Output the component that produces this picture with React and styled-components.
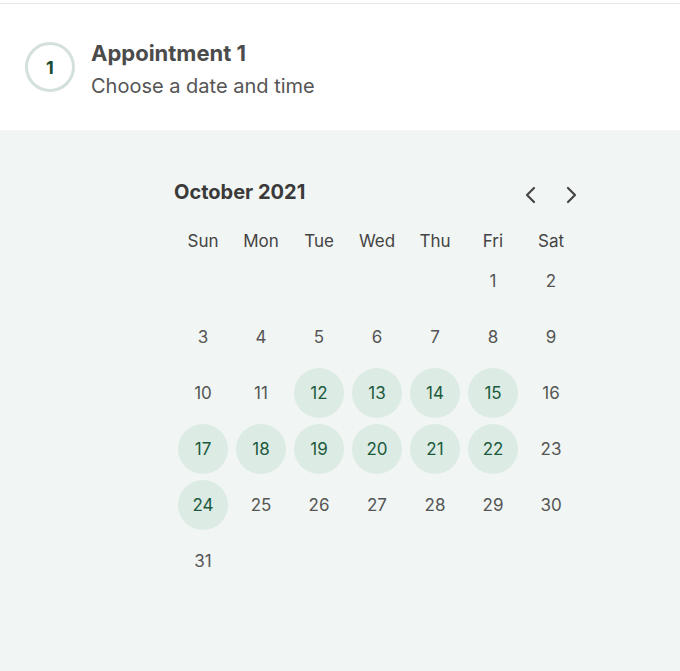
import React from "react";
import styled, { createGlobalStyle } from "styled-components";

const GlobalStyle = createGlobalStyle`
  html, body {
    margin: 0;
    padding: 0;
    background: #ffffff;
    font-family: Inter, "Noto Sans", "Liberation Sans", sans-serif;
  }
`;

const WEEKDAYS = ["Sun", "Mon", "Tue", "Wed", "Thu", "Fri", "Sat"];
const AVAILABLE = [12, 13, 14, 15, 17, 18, 19, 20, 21, 22, 24];
const FIRST_WEEKDAY = 5; // Oct 1 2021 is a Friday
const DAYS_IN_MONTH = 31;

const Chevron = ({ dir }) => (
  <svg width="14" height="18" viewBox="0 0 14 18" fill="none">
    <path
      d={dir === "left" ? "M10 2 L3 9 L10 16" : "M4 2 L11 9 L4 16"}
      stroke="#454545"
      strokeWidth="2.2"
      strokeLinecap="round"
      strokeLinejoin="round"
    />
  </svg>
);

const App = () => {
  const cells = [];
  for (let i = 0; i < FIRST_WEEKDAY; i++) cells.push(null);
  for (let d = 1; d <= DAYS_IN_MONTH; d++) cells.push(d);

  return (
    <Page>
      <GlobalStyle />
      <Header>
        <StepCircle>1</StepCircle>
        <HeaderText>
          <Title>Appointment 1</Title>
          <Subtitle>Choose a date and time</Subtitle>
        </HeaderText>
      </Header>
      <Panel>
        <Calendar>
          <MonthRow>
            <MonthLabel>October 2021</MonthLabel>
            <Nav>
              <NavButton aria-label="Previous month"><Chevron dir="left" /></NavButton>
              <NavButton aria-label="Next month"><Chevron dir="right" /></NavButton>
            </Nav>
          </MonthRow>
          <WeekdayRow>
            {WEEKDAYS.map((w) => (
              <Weekday key={w}>{w}</Weekday>
            ))}
          </WeekdayRow>
          <DayGrid>
            {cells.map((d, i) => (
              <DayCell key={i}>
                {d && <Day $available={AVAILABLE.includes(d)}>{d}</Day>}
              </DayCell>
            ))}
          </DayGrid>
        </Calendar>
      </Panel>
    </Page>
  );
};

export default App;

const Page = styled.div`
  min-height: 100vh;
  display: flex;
  flex-direction: column;
  padding-top: 3px;
  box-sizing: border-box;
`;

const Header = styled.div`
  display: flex;
  align-items: center;
  gap: 16px;
  height: 126px;
  padding-left: 25px;
  border-top: 1px solid #e6e8e7;
  background: #ffffff;
`;

const StepCircle = styled.div`
  width: 44px;
  height: 44px;
  border-radius: 50%;
  border: 3px solid #d4e1db;
  display: flex;
  align-items: center;
  justify-content: center;
  font-size: 18px;
  font-weight: 700;
  color: #1b4d35;
`;

const HeaderText = styled.div`
  display: flex;
  flex-direction: column;
  gap: 7px;
  margin-top: 5px;
`;

const Title = styled.div`
  font-size: 22px;
  font-weight: 700;
  color: #4b4b4b;
  line-height: 26px;
`;

const Subtitle = styled.div`
  font-size: 20px;
  color: #555555;
  line-height: 26px;
`;

const Panel = styled.div`
  flex: 1;
  background: #f1f5f3;
  padding-top: 48px;
`;

const Calendar = styled.div`
  width: 406px;
  margin-left: 174px;
`;

const MonthRow = styled.div`
  display: flex;
  align-items: center;
  justify-content: space-between;
  height: 32px;
`;

const MonthLabel = styled.div`
  font-size: 20px;
  font-weight: 700;
  color: #3a3a3a;
  margin-top: -4px;
`;

const Nav = styled.div`
  display: flex;
  gap: 22px;
  padding-top: 2px;
`;

const NavButton = styled.button`
  border: none;
  background: none;
  padding: 0;
  width: 18px;
  height: 20px;
  display: flex;
  align-items: center;
  justify-content: center;
  cursor: pointer;
`;

const WeekdayRow = styled.div`
  display: grid;
  grid-template-columns: repeat(7, 58px);
  margin-top: 20px;
  height: 22px;
  align-items: center;
`;

const Weekday = styled.div`
  text-align: center;
  font-size: 17px;
  color: #444444;
`;

const DayGrid = styled.div`
  display: grid;
  grid-template-columns: repeat(7, 58px);
  grid-auto-rows: 56px;
  margin-top: 1px;
`;

const DayCell = styled.div`
  display: flex;
  align-items: center;
  justify-content: center;
`;

const Day = styled.div`
  width: 50px;
  height: 50px;
  border-radius: 50%;
  display: flex;
  align-items: center;
  justify-content: center;
  font-size: 17px;
  color: ${(p) => (p.$available ? "#1c5a3e" : "#555555")};
  background: ${(p) => (p.$available ? "#dcebe3" : "transparent")};
`;
